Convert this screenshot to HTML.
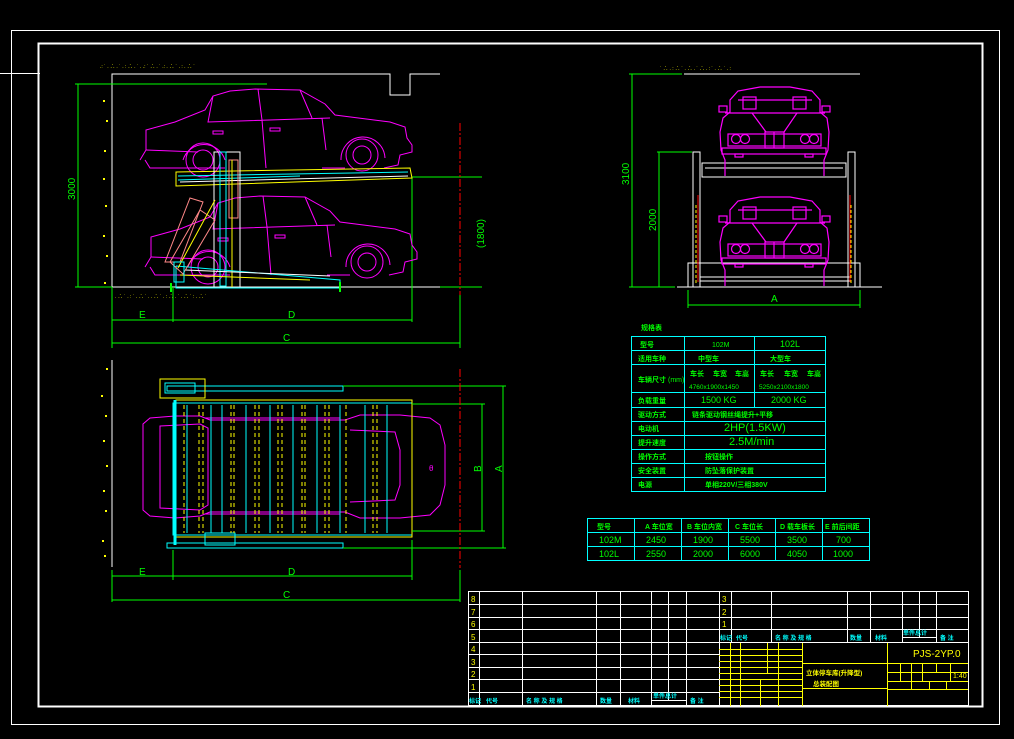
<!DOCTYPE html>
<html><head><meta charset="utf-8"><style>
html,body{margin:0;padding:0;background:#000;}
svg{display:block}
text{font-family:"Liberation Sans","Noto Sans CJK SC",sans-serif;}
.cn{font-family:"Liberation Sans","Noto Sans CJK SC",sans-serif;font-weight:bold}
</style></head><body>
<svg width="1014" height="739" viewBox="0 0 1014 739" xmlns="http://www.w3.org/2000/svg">
<rect width="1014" height="739" fill="#000"/>
<!-- frames -->
<rect x="11.5" y="30.5" width="988" height="694" fill="none" stroke="#fff" stroke-width="1"/>
<rect x="38.5" y="43.5" width="944" height="663" fill="none" stroke="#fff" stroke-width="2"/>
<line x1="0" y1="73.5" x2="40" y2="73.5" stroke="#fff"/>

<!-- yellow speckles -->
<g fill="#ff0" font-size="5">
<text x="100" y="68">.:  ˙ .  ∴ .  ˙ . :  ∴ .   ˙ .  .: ˙  ∴  .  ˙ .:  . ∴ ˙ . : .  ∴ ˙</text>
<text x="115" y="298">.  ∴ ˙ .  : ˙  .  ∴  ˙ . .   ∴   ˙ . : ∴ . ˙  .  ∴ ˙  : . ∴ ˙</text>
<text x="660" y="70">˙ ∴ . : ∴ ˙ . ∴ . ˙ ∴ . : ˙ . ∴ ˙ . :</text>
</g>
<g fill="#ff0">
<rect x="103" y="100" width="2" height="2"/><rect x="106" y="120" width="2" height="2"/><rect x="104" y="150" width="2" height="2"/><rect x="103" y="178" width="2" height="2"/><rect x="105" y="205" width="2" height="2"/><rect x="103" y="235" width="2" height="2"/><rect x="106" y="255" width="2" height="2"/><rect x="104" y="282" width="2" height="2"/>
<rect x="101" y="395" width="2" height="2"/><rect x="105" y="415" width="2" height="2"/><rect x="103" y="440" width="2" height="2"/><rect x="106" y="465" width="2" height="2"/><rect x="103" y="490" width="2" height="2"/><rect x="105" y="510" width="2" height="2"/><rect x="102" y="540" width="2" height="2"/><rect x="104" y="555" width="2" height="2"/><rect x="106" y="368" width="2" height="2"/>
</g>

<!-- ===== side elevation ===== -->
<g fill="none" stroke="#fff" stroke-width="1">
<polyline points="112,287 112,74 390,74 390,95 410,95 410,74 440,74"/>
<line x1="112" y1="287" x2="440" y2="287"/>
</g>
<g fill="none" stroke="#0f0" stroke-width="1">
<line x1="78" y1="84" x2="78" y2="287"/><line x1="75" y1="84" x2="267" y2="84"/><line x1="75" y1="287" x2="112" y2="287"/>
<line x1="112" y1="287" x2="112" y2="348"/><line x1="173" y1="287" x2="173" y2="322"/><line x1="412" y1="178" x2="412" y2="322"/><line x1="460" y1="295" x2="460" y2="348"/>
<line x1="112" y1="320" x2="412" y2="320"/><line x1="112" y1="343" x2="460" y2="343"/>
<line x1="412" y1="177" x2="482" y2="177"/><line x1="440" y1="287" x2="482" y2="287"/>
</g>
<line x1="460" y1="123" x2="460" y2="295" stroke="#f00" stroke-dasharray="8,2,2,2"/>
<g fill="#0f0" font-size="10">
<text x="0" y="0" transform="translate(75,200) rotate(-90)">3000</text>
<text x="0" y="0" transform="translate(484,248) rotate(-90)">(1800)</text>
<text x="139" y="318">E</text><text x="288" y="318">D</text><text x="283" y="341">C</text>
</g>
<!-- cars side -->
<g id="carside" fill="none" stroke="#f0f" stroke-width="1">
<path d="M140,160 L146,150 L146,130 L175,122 L205,110 L213,96 L230,91 L255,89 L300,90 L325,104 L335,115 L390,122 L405,127 L407,138 L412,145 L412,152 L400,155 L398,165 L384,168 L385,168 M345,168 L322,168 M225,168 L185,168 L150,168 L145,160"/>
<path d="M213,96 L208,122 L330,118 M258,89 L262,120 M262,120 L266,168 M146,150 L198,152 M300,90 L312,118 M322,118 L326,150"/>
<path d="M183,160 A22,22 0 0 1 225,160 M341,160 A22,22 0 0 1 385,158"/>
<circle cx="203" cy="160" r="17"/><circle cx="203" cy="160" r="10"/>
<circle cx="362" cy="155" r="16"/><circle cx="362" cy="155" r="9"/>
<rect x="213" y="131" width="10" height="3"/><rect x="270" y="128" width="10" height="3"/>
</g>
<use href="#carside" transform="translate(5,107)"/>
<!-- lift mechanism -->
<g fill="none" stroke-width="1">
<polygon points="176,172 410,168 412,178 176,186" stroke="#ff0"/>
<polyline points="178,176 408,172" stroke="#0ff"/><polyline points="180,182 408,176" stroke="#fff"/>
<polyline points="178,180 300,176" stroke="#0ff"/>
<rect x="214" y="152" width="26" height="136" stroke="#fff"/>
<rect x="220" y="152" width="6" height="134" stroke="#0ff"/>
<rect x="229" y="160" width="9" height="58" stroke="#f88"/>
<line x1="232" y1="160" x2="232" y2="287" stroke="#ff0"/>
<polyline points="176,266 340,280 340,288 176,288 176,266" stroke="#0ff"/>
<polyline points="185,270 330,276" stroke="#fff"/><polyline points="180,275 310,280" stroke="#ff0"/>
<polygon points="165,262 190,198 203,202 180,262" stroke="#f88"/>
<polygon points="170,262 200,210 215,220 183,274" stroke="#f88"/>
<line x1="178" y1="268" x2="215" y2="200" stroke="#ff0"/>
<rect x="174" y="262" width="10" height="20" stroke="#0ff"/>
<line x1="340" y1="282" x2="340" y2="292" stroke="#0f0" stroke-width="2"/>
<line x1="171" y1="283" x2="171" y2="292" stroke="#0f0" stroke-width="2"/>
</g>

<!-- ===== plan view ===== -->
<line x1="112" y1="360" x2="112" y2="567" stroke="#fff"/>
<g fill="none" stroke-width="1">
<path d="M150,418 L175,416 L200,416 L210,420 L345,420 L360,415 L400,415 L430,418 L440,425 L445,445 L445,485 L440,505 L430,515 L400,518 L360,518 L345,512 L210,512 L200,516 L175,518 L150,516 L143,510 L143,424 Z" stroke="#f0f"/>
<path d="M160,426 L200,424 L208,428 L208,505 L200,510 L160,508 Z M205,418 L340,418 M205,514 L340,514 M350,430 L395,432 L400,450 L400,485 L395,500 L350,502" stroke="#f0f"/>
<rect x="173" y="403" width="239" height="132" stroke="#0ff"/>
<rect x="176" y="400" width="236" height="137" stroke="#ff0"/>
<rect x="167" y="386" width="176" height="5" stroke="#0ff"/><rect x="167" y="543" width="176" height="5" stroke="#0ff"/>
<rect x="160" y="379" width="45" height="19" stroke="#ff0"/><rect x="165" y="383" width="30" height="10" stroke="#0ff"/>
<rect x="205" y="533" width="30" height="12" stroke="#0ff"/>
<line x1="175" y1="400" x2="175" y2="545" stroke="#0ff" stroke-width="3"/>
</g>
<g stroke-width="1">
<g stroke="#ff0" stroke-dasharray="4,3">
<line x1="199" y1="405" x2="199" y2="533"/><line x1="203" y1="405" x2="203" y2="533"/><line x1="231" y1="405" x2="231" y2="533"/><line x1="234" y1="405" x2="234" y2="533"/><line x1="255" y1="405" x2="255" y2="533"/><line x1="259" y1="405" x2="259" y2="533"/><line x1="278" y1="405" x2="278" y2="533"/><line x1="282" y1="405" x2="282" y2="533"/><line x1="302" y1="405" x2="302" y2="533"/><line x1="305" y1="405" x2="305" y2="533"/><line x1="325" y1="405" x2="325" y2="533"/><line x1="329" y1="405" x2="329" y2="533"/><line x1="346" y1="405" x2="346" y2="533"/><line x1="373" y1="405" x2="373" y2="533"/><line x1="377" y1="405" x2="377" y2="533"/><line x1="184" y1="405" x2="184" y2="533"/>
</g>
<g stroke="#0ff">
<line x1="187" y1="405" x2="187" y2="533"/><line x1="211" y1="405" x2="211" y2="533"/><line x1="222" y1="405" x2="222" y2="533"/><line x1="246" y1="405" x2="246" y2="533"/><line x1="270" y1="405" x2="270" y2="533"/><line x1="293" y1="405" x2="293" y2="533"/><line x1="317" y1="405" x2="317" y2="533"/><line x1="340" y1="405" x2="340" y2="533"/><line x1="365" y1="405" x2="365" y2="533"/><line x1="387" y1="405" x2="387" y2="533"/>
</g>
</g>
<text x="429" y="471" fill="#f0f" font-size="8">θ</text>
<g fill="none" stroke="#0f0">
<line x1="343" y1="386" x2="506" y2="386"/><line x1="343" y1="548" x2="506" y2="548"/>
<line x1="412" y1="404" x2="485" y2="404"/><line x1="412" y1="531" x2="485" y2="531"/>
<line x1="482" y1="404" x2="482" y2="531"/><line x1="503" y1="386" x2="503" y2="548"/>
<line x1="112" y1="570" x2="112" y2="602"/><line x1="173" y1="550" x2="173" y2="580"/><line x1="412" y1="540" x2="412" y2="580"/><line x1="460" y1="570" x2="460" y2="602"/>
<line x1="112" y1="576" x2="412" y2="576"/><line x1="112" y1="600" x2="460" y2="600"/>
</g>
<line x1="460" y1="369" x2="460" y2="568" stroke="#f00" stroke-dasharray="8,2,2,2"/>
<g fill="#0f0" font-size="10">
<text x="139" y="575">E</text><text x="288" y="575">D</text><text x="283" y="598">C</text>
<text transform="translate(481,472) rotate(-90)">B</text><text transform="translate(502,472) rotate(-90)">A</text>
</g>

<!-- ===== front view ===== -->
<g fill="none" stroke="#fff">
<line x1="684" y1="74" x2="860" y2="74"/><line x1="677" y1="287" x2="882" y2="287"/>
<rect x="693" y="152" width="7" height="135"/><rect x="848" y="152" width="7" height="135"/>
<rect x="702" y="163" width="144" height="14"/><line x1="705" y1="168" x2="843" y2="168"/>
<rect x="688" y="263" width="172" height="24"/><line x1="700" y1="277" x2="850" y2="277"/><line x1="700" y1="281" x2="850" y2="281"/>
</g>
<g stroke="#ff0" stroke-dasharray="3,2"><line x1="696" y1="205" x2="696" y2="285"/><line x1="851" y1="205" x2="851" y2="285"/></g>
<g stroke="#f00"><line x1="698" y1="195" x2="698" y2="282"/><line x1="850" y1="195" x2="850" y2="282"/></g>
<g fill="none" stroke="#0f0">
<line x1="632" y1="74" x2="632" y2="287"/><line x1="629" y1="74" x2="682" y2="74"/><line x1="629" y1="287" x2="675" y2="287"/>
<line x1="659" y1="152" x2="659" y2="287"/><line x1="657" y1="152" x2="692" y2="152"/>
<line x1="688" y1="290" x2="688" y2="308"/><line x1="860" y1="290" x2="860" y2="308"/><line x1="688" y1="305" x2="860" y2="305"/>
</g>
<g fill="#0f0" font-size="10">
<text transform="translate(629,185) rotate(-90)">3100</text><text transform="translate(656,231) rotate(-90)">2000</text>
<text x="771" y="302">A</text>
</g>
<g id="carfront" fill="none" stroke="#f0f" stroke-width="1.2">
<path d="M725,176 L725,160 L721,150 L720,132 L723,118 L730,112 L730,100 L738,91 L760,87 L790,87 L812,91 L820,100 L820,112 L827,118 L829,132 L828,150 L824,160 L824,176"/>
<path d="M725,113 L825,113 M738,100 L812,100"/>
<rect x="743" y="97" width="13" height="12"/><rect x="793" y="97" width="13" height="12"/>
<rect x="719" y="106" width="8" height="6"/><rect x="822" y="106" width="8" height="6"/>
<rect x="728" y="134" width="93" height="12"/>
<circle cx="736" cy="139" r="4.5"/><circle cx="745" cy="139" r="4.5"/><circle cx="805" cy="139" r="4.5"/><circle cx="814" cy="139" r="4.5"/>
<rect x="765" y="132" width="19" height="16"/><line x1="774" y1="132" x2="774" y2="148"/>
<rect x="722" y="148" width="104" height="6"/>
<line x1="752" y1="113" x2="766" y2="132"/><line x1="797" y1="113" x2="784" y2="132"/>
<rect x="735" y="154" width="8" height="3"/><rect x="805" y="154" width="8" height="3"/>
</g>
<use href="#carfront" transform="translate(0,110)"/>

<!-- ===== spec table ===== -->
<text x="641" y="330" fill="#0f0" font-size="7" class="cn">规格表</text>
<g fill="none" stroke="#0ff" stroke-width="1">
<rect x="631.5" y="336.5" width="194" height="155"/>
<line x1="631" y1="350.5" x2="826" y2="350.5"/><line x1="631" y1="364.5" x2="826" y2="364.5"/><line x1="631" y1="392.5" x2="826" y2="392.5"/><line x1="631" y1="407.5" x2="826" y2="407.5"/><line x1="631" y1="421.5" x2="826" y2="421.5"/><line x1="631" y1="435.5" x2="826" y2="435.5"/><line x1="631" y1="449.5" x2="826" y2="449.5"/><line x1="631" y1="463.5" x2="826" y2="463.5"/><line x1="631" y1="477.5" x2="826" y2="477.5"/>
<line x1="684.5" y1="336" x2="684.5" y2="492"/><line x1="754.5" y1="336" x2="754.5" y2="407"/>
</g>
<g fill="#0f0" font-size="7" class="cn">
<text x="640" y="347">型号</text><text x="638" y="361">适用车种</text><text x="638" y="382">车辆尺寸</text><text x="668" y="382" font-weight="normal">(mm)</text>
<text x="638" y="403">负载重量</text><text x="638" y="417">驱动方式</text><text x="638" y="431">电动机</text><text x="638" y="445">提升速度</text><text x="638" y="459">操作方式</text><text x="638" y="473">安全装置</text><text x="638" y="487">电源</text>
<text x="712" y="347" font-weight="normal">102M</text>
<text x="698" y="361">中型车</text><text x="770" y="361">大型车</text>
<text x="690" y="376">车长</text><text x="713" y="376">车宽</text><text x="735" y="376">车高</text>
<text x="760" y="376">车长</text><text x="784" y="376">车宽</text><text x="807" y="376">车高</text>
<text x="689" y="389" font-weight="normal" font-size="6.5">4760x1900x1450</text><text x="759" y="389" font-weight="normal" font-size="6.5">5250x2100x1800</text>
<text x="692" y="417">链条驱动钢丝绳提升+平移</text>
<text x="705" y="459">按钮操作</text><text x="705" y="473">防坠落保护装置</text><text x="705" y="487">单相220V/三相380V</text>
</g>
<g fill="#0f0" font-weight="normal">
<text x="780" y="347" font-size="9">102L</text>
<text x="701" y="403" font-size="9">1500 KG</text><text x="771" y="403" font-size="9">2000 KG</text>
<text x="724" y="431" font-size="11">2HP(1.5KW)</text><text x="729" y="445" font-size="11">2.5M/min</text>
</g>
<!-- second table -->
<g fill="none" stroke="#0ff">
<rect x="587.5" y="518.5" width="282" height="42"/>
<line x1="587" y1="532.5" x2="870" y2="532.5"/><line x1="587" y1="546.5" x2="870" y2="546.5"/>
<line x1="634.5" y1="518" x2="634.5" y2="561"/><line x1="681.5" y1="518" x2="681.5" y2="561"/><line x1="728.5" y1="518" x2="728.5" y2="561"/><line x1="775.5" y1="518" x2="775.5" y2="561"/><line x1="822.5" y1="518" x2="822.5" y2="561"/>
</g>
<g fill="#0f0" font-size="7" class="cn">
<text x="597" y="529">型号</text><text x="645" y="529">A 车位宽</text><text x="687" y="529">B 车位内宽</text><text x="735" y="529">C 车位长</text><text x="780" y="529">D 载车板长</text><text x="825" y="529">E 前后间距</text>
</g>
<g fill="#0f0" font-size="9">
<text x="599" y="543">102M</text><text x="646" y="543">2450</text><text x="693" y="543">1900</text><text x="740" y="543">5500</text><text x="787" y="543">3500</text><text x="836" y="543">700</text>
<text x="599" y="557">102L</text><text x="646" y="557">2550</text><text x="693" y="557">2000</text><text x="740" y="557">6000</text><text x="787" y="557">4050</text><text x="833" y="557">1000</text>
</g>

<!-- ===== title block ===== -->
<g fill="none" stroke="#fff" stroke-width="1">
<rect x="468.5" y="591.5" width="500" height="114"/>
<line x1="468" y1="604.5" x2="719" y2="604.5"/><line x1="468" y1="617.5" x2="719" y2="617.5"/><line x1="468" y1="629.5" x2="968" y2="629.5"/><line x1="468" y1="642.5" x2="968" y2="642.5"/><line x1="468" y1="654.5" x2="719" y2="654.5"/><line x1="468" y1="667.5" x2="719" y2="667.5"/><line x1="468" y1="679.5" x2="719" y2="679.5"/><line x1="468" y1="692.5" x2="719" y2="692.5"/>
<line x1="719" y1="604.5" x2="968" y2="604.5"/><line x1="719" y1="617.5" x2="968" y2="617.5"/>
<line x1="479.5" y1="591" x2="479.5" y2="706"/><line x1="522.5" y1="591" x2="522.5" y2="706"/><line x1="596.5" y1="591" x2="596.5" y2="706"/><line x1="620.5" y1="591" x2="620.5" y2="706"/><line x1="651.5" y1="591" x2="651.5" y2="706"/><line x1="668.5" y1="591" x2="668.5" y2="700"/><line x1="686.5" y1="591" x2="686.5" y2="706"/><line x1="719.5" y1="591" x2="719.5" y2="706"/>
<line x1="731.5" y1="591" x2="731.5" y2="642"/><line x1="771.5" y1="591" x2="771.5" y2="642"/><line x1="847.5" y1="591" x2="847.5" y2="642"/><line x1="870.5" y1="591" x2="870.5" y2="642"/><line x1="902.5" y1="591" x2="902.5" y2="642"/><line x1="919.5" y1="591" x2="919.5" y2="637"/><line x1="936.5" y1="591" x2="936.5" y2="642"/>
<line x1="651" y1="700.5" x2="686" y2="700.5"/><line x1="902" y1="637.5" x2="936" y2="637.5"/>
</g>
<g fill="none" stroke="#ff0" stroke-width="1">
<line x1="802.5" y1="643" x2="802.5" y2="706"/><line x1="887.5" y1="643" x2="887.5" y2="706"/>
<line x1="802" y1="663.5" x2="968" y2="663.5"/><line x1="802" y1="688.5" x2="887" y2="688.5"/>
<line x1="887" y1="681.5" x2="968" y2="681.5"/><line x1="887" y1="689.5" x2="968" y2="689.5"/><line x1="887" y1="672.5" x2="968" y2="672.5"/>
<line x1="900.5" y1="663" x2="900.5" y2="681"/><line x1="911.5" y1="663" x2="911.5" y2="681"/><line x1="922.5" y1="663" x2="922.5" y2="681"/><line x1="936.5" y1="663" x2="936.5" y2="672"/><line x1="950.5" y1="663" x2="950.5" y2="681"/>
<line x1="911.5" y1="681" x2="911.5" y2="689"/><line x1="929.5" y1="681" x2="929.5" y2="689"/><line x1="946.5" y1="681" x2="946.5" y2="689"/>
<line x1="719" y1="649.5" x2="802" y2="649.5"/><line x1="719" y1="655.5" x2="802" y2="655.5"/><line x1="719" y1="661.5" x2="802" y2="661.5"/><line x1="719" y1="667.5" x2="802" y2="667.5"/><line x1="719" y1="673.5" x2="802" y2="673.5"/><line x1="719" y1="679.5" x2="802" y2="679.5"/><line x1="719" y1="685.5" x2="802" y2="685.5"/><line x1="719" y1="691.5" x2="802" y2="691.5"/><line x1="719" y1="697.5" x2="802" y2="697.5"/>
<line x1="730.5" y1="643" x2="730.5" y2="706"/><line x1="740.5" y1="643" x2="740.5" y2="706"/><line x1="767.5" y1="643" x2="767.5" y2="673"/><line x1="760.5" y1="679" x2="760.5" y2="706"/><line x1="778.5" y1="643" x2="778.5" y2="706"/>
</g>
<g fill="#ff0" font-size="8">
<text x="471" y="602">8</text><text x="471" y="615">7</text><text x="471" y="627">6</text><text x="471" y="640">5</text><text x="471" y="652">4</text><text x="471" y="665">3</text><text x="471" y="677">2</text><text x="471" y="690">1</text>
<text x="722" y="602">3</text><text x="722" y="615">2</text><text x="722" y="627">1</text>
<text x="913" y="657" font-size="10">PJS-2YP.0</text><text x="953" y="678" font-size="7">1:40</text>
</g>
<g fill="#ff0" font-size="6.5" class="cn">
<text x="806" y="675">立体停车库(升降型)</text><text x="813" y="686">总装配图</text>
</g>
<g fill="#0ff" font-size="6" class="cn">
<text x="469" y="703">标记</text><text x="486" y="703">代号</text><text x="526" y="703">名 称 及 规 格</text><text x="600" y="703">数量</text><text x="628" y="703">材料</text><text x="653" y="698">单件总计</text><text x="690" y="703">备 注</text>
<text x="720" y="640">标记</text><text x="736" y="640">代号</text><text x="775" y="640">名 称 及 规 格</text><text x="850" y="640">数量</text><text x="875" y="640">材料</text><text x="903" y="635">单件总计</text><text x="940" y="640">备 注</text>
</g>
</svg>
</body></html>
